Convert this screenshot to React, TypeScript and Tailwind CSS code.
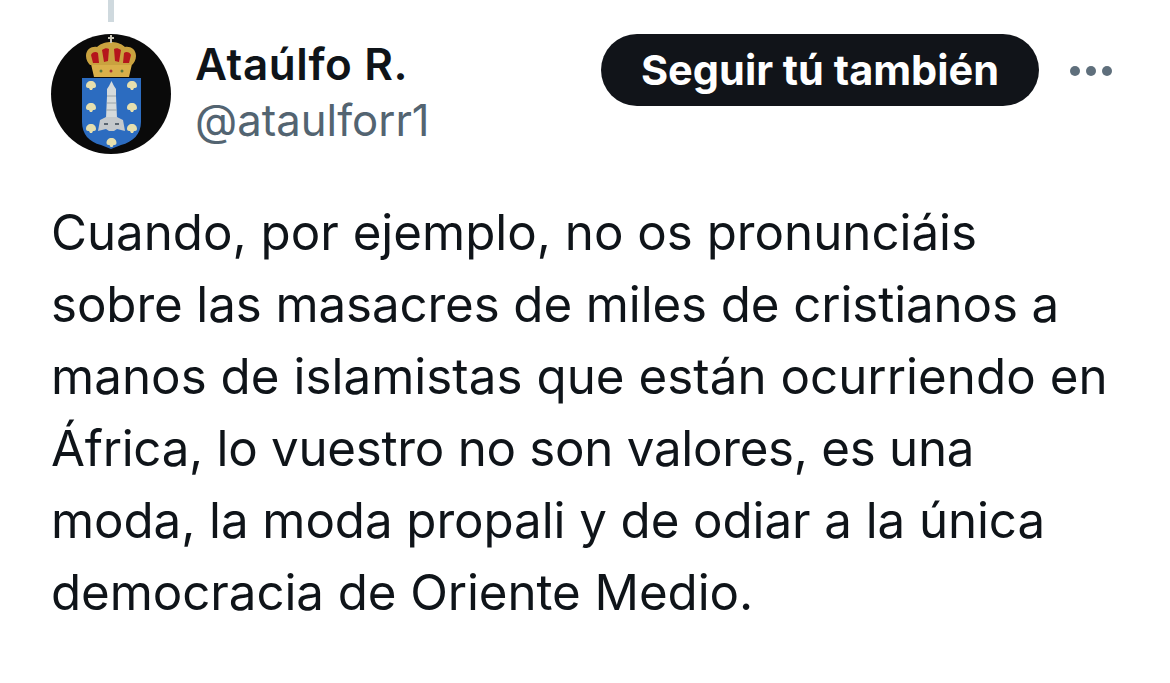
import React from 'react';

const lines = [
  { text: 'Cuando, por ejemplo, no os pronunciáis', cls: 'tracking-normal' },
  { text: 'sobre las masacres de miles de cristianos a', cls: 'tracking-[-0.1px]' },
  { text: 'manos de islamistas que están ocurriendo en', cls: 'tracking-[0.05px]' },
  { text: 'África, lo vuestro no son valores, es una', cls: 'tracking-[-0.27px]' },
  { text: 'moda, la moda propali y de odiar a la única', cls: 'tracking-[-0.07px]' },
  { text: 'democracia de Oriente Medio.', cls: 'tracking-[-0.07px]' },
];

const font = { fontFamily: 'Inter, "Liberation Sans", sans-serif' };

const scallops = [
  [40, 51],
  [81, 51],
  [40, 73],
  [81, 73],
  [40, 94],
  [81, 94],
  [60.5, 108],
];

const Avatar = () => (
  <svg width="120" height="120" viewBox="0 0 120 120" className="shrink-0">
    <circle cx="60" cy="60" r="60" fill="#0a0a0a" />
    {/* shield */}
    <path d="M31 44h59v44c0 12-8 20-20 23l-10 4-10-4c-12-3-19-11-19-23z" fill="#2c6cc0" />
    {/* crown */}
    <path d="M40 30h41l-3 13H43z" fill="#d9b04a" />
    <path d="M35 22c0-7 6-10 11-9 4-4 10-5 14-5s10 1 14 5c5-1 11 2 11 9 0 4-2 7-4 9H39c-2-2-4-5-4-9z" fill="#c9a23f" />
    <path d="M40 21c1-3 5-4 7-2l1 10h-6zM51 16c3-2 5-2 7-1l-1 12-4 1zM63 15c2-1 4-1 7 1l-2 12-4-1zM73 19c2-2 6-1 7 2l-2 8h-6z" fill="#b5161c" />
    <path d="M60 1v8M57 4h6" stroke="#c8c4b4" strokeWidth="2" />
    <circle cx="50" cy="37" r="1.5" fill="#5f7a3a" />
    <circle cx="60" cy="37" r="1.5" fill="#a33" />
    <circle cx="71" cy="37" r="1.5" fill="#5f7a3a" />
    {/* tower */}
    <path d="M58 52l2.500-5 2.500 5 2 3v7l1 22H55l1-22v-7z" fill="#d5dadb" />
    <path d="M56 62h9M56 69h9M55 76h11" stroke="#9aa4aa" strokeWidth="1" />
    <path d="M47 97l2-11 6-3h11l6 3 2 11-8-2-3 2h-5l-3-2z" fill="#c4c9cc" />
    <path d="M53 90h4M64 90h4" stroke="#5a6670" strokeWidth="2" />
    {/* scallop shells */}
    {scallops.map(([x, y]) => (
      <path
        key={`${x}-${y}`}
        d={`M${x - 5} ${y + 1}c0-3 2-5 5-5s5 2 5 5c0 2-2 2-3 2l-1 2h-2l-1-2c-1 0-3 0-3-2z`}
        fill="#e6dfae"
      />
    ))}
  </svg>
);

export default function App() {
  return (
    <div className="w-[1170px] h-[683px] bg-white overflow-hidden text-[#0f1419]" style={font}>
      <div className="ml-[108px] w-[6px] h-[22px] bg-[#cfd9de]" />
      <div className="flex items-start pl-[51px] pr-[58px] pt-3">
        <Avatar />
        <div className="ml-[24px] flex-1 pt-1">
          <div className="text-[44px] leading-[52px] font-semibold tracking-[0.6px]">Ataúlfo R.</div>
          <div className="mt-1 text-[43.700px] leading-[54px] text-[#536471]">@ataulforr1</div>
        </div>
        <button className="h-[72px] w-[438px] rounded-full bg-[#111419] text-white text-[41.500px] font-bold">
          Seguir tú también
        </button>
        <div className="ml-[31px] mt-[32px] flex gap-[6px]">
          <span className="size-[10px] rounded-full bg-[#5f6f7c]" />
          <span className="size-[10px] rounded-full bg-[#5f6f7c]" />
          <span className="size-[10px] rounded-full bg-[#5f6f7c]" />
        </div>
      </div>
      <div className="pl-[51px] pt-[42px] text-[49.250px] leading-[72px] whitespace-nowrap">
        {lines.map((l) => (
          <div key={l.text} className={l.cls}>
            {l.text}
          </div>
        ))}
      </div>
    </div>
  );
}
